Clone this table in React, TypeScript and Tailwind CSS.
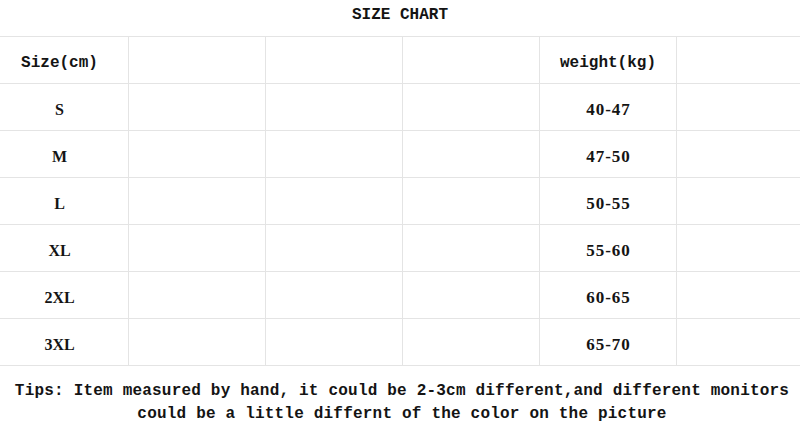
import React from 'react';

const rows = [
  { size: 'S', weight: '40-47' },
  { size: 'M', weight: '47-50' },
  { size: 'L', weight: '50-55' },
  { size: 'XL', weight: '55-60' },
  { size: '2XL', weight: '60-65' },
  { size: '3XL', weight: '65-70' },
];

const mono = "font-['Liberation_Mono','Noto_Sans_CJK_SC',monospace]";
const serif = "font-['Liberation_Serif','Noto_Sans_CJK_SC',serif]";

export default function App() {
  return (
    <div className="w-[800px] h-[430px] bg-white overflow-hidden text-[#141414]">
      {/* Title */}
      <div className={`h-[36px] leading-[31px] text-center text-[16px] font-bold ${mono}`}>
        SIZE CHART
      </div>

      {/* Table */}
      <div className="-ml-[9px] w-[822px] border-t border-[#e4e4e4]">
        <div className="grid grid-cols-6 h-[47px] border-b border-[#e4e4e4]">
          <div className={`flex items-center justify-center pt-[5px] text-[16px] font-bold ${mono}`}>Size(cm)</div>
          <div className="border-l border-[#e4e4e4]" />
          <div className="border-l border-[#e4e4e4]" />
          <div className="border-l border-[#e4e4e4]" />
          <div className={`flex items-center justify-center pt-[5px] border-l border-[#e4e4e4] text-[16px] font-bold ${mono}`}>
            weight(kg)
          </div>
          <div className="border-l border-[#e4e4e4]" />
        </div>
        {rows.map((r) => (
          <div key={r.size} className="grid grid-cols-6 h-[47px] border-b border-[#e4e4e4]">
            <div className={`flex items-center justify-center pt-[6px] text-[16px] font-bold ${serif}`}>{r.size}</div>
            <div className="border-l border-[#e4e4e4]" />
            <div className="border-l border-[#e4e4e4]" />
            <div className="border-l border-[#e4e4e4]" />
            <div className={`flex items-center justify-center pt-[6px] pl-[1px] border-l border-[#e4e4e4] text-[17px] font-bold tracking-[1px] ${serif}`}>
              {r.weight}
            </div>
            <div className="border-l border-[#e4e4e4]" />
          </div>
        ))}
      </div>

      {/* Tips */}
      <div className={`pt-[14px] pl-[4px] text-center text-[16px] leading-[23px] font-bold tracking-[0.2px] whitespace-nowrap ${mono}`}>
        <div>Tips: Item measured by hand, it could be 2-3cm different,and different monitors</div>
        <div>could be a little differnt of the color on the picture</div>
      </div>
    </div>
  );
}
